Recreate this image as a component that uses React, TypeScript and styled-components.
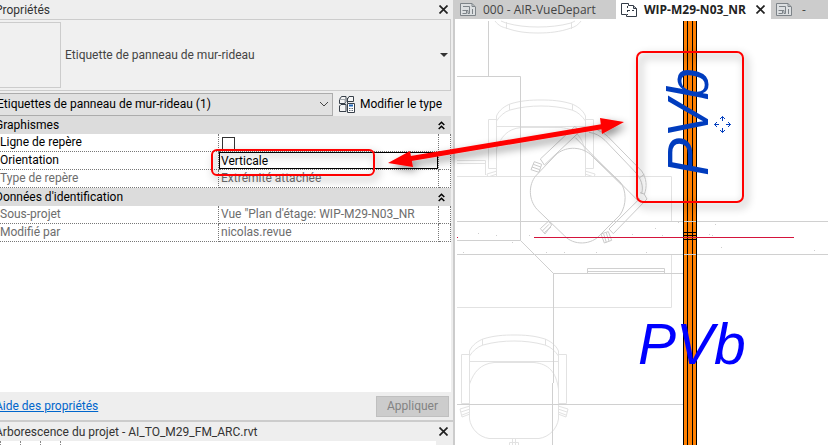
import React from "react";
import styled, { createGlobalStyle } from "styled-components";

const GlobalStyle = createGlobalStyle`
  * { box-sizing: border-box; }
  html, body { margin: 0; height: 100%; }
  body {
    overflow: hidden;
    font-family: Roboto, "Open Sans", sans-serif;
    font-size: 12px;
    line-height: 16px;
    color: #000;
  }
  button, input, select { font: inherit; color: inherit; margin: 0; padding: 0; }
  button { border: 0; background: none; }
`;

const Window = styled.div`
  position: relative;
  display: grid;
  grid-template-columns: minmax(0, 455fr) minmax(0, 373fr);
  height: 100vh;
  overflow: hidden;
  background: #fff;
`;

const Dock = styled.aside`
  display: flex;
  overflow: hidden;
  background: #eee;
  border-right: 2px solid #ccc;
`;

const DockContent = styled.div`
  flex: 1;
  min-width: 0;
  display: flex;
  flex-direction: column;
  margin-left: -6px;
`;

const TitleBar = styled.header`
  flex: none;
  display: flex;
  align-items: center;
  justify-content: space-between;
  height: 19px;
  padding: 0 4px 0 1px;
  color: #333;
`;

const Heading = styled.h2`
  margin: 0;
  font-size: 12px;
  font-weight: 400;
`;

const IconButton = styled.button`
  display: flex;
  align-items: center;
  justify-content: center;
  width: 12px;
  height: 16px;
`;

const TypeSelector = styled.button`
  flex: none;
  display: flex;
  align-items: center;
  gap: 4px;
  height: 72px;
  margin-right: 2px;
  padding: 2px 2px 2px 0;
  border: 1px solid #ccc;
  background: #f0f0f0;
  color: #444;
  text-align: left;
`;

const Thumbnail = styled.span`
  width: 66px;
  height: 66px;
  border: 1px solid #ccc;
`;

const TypeName = styled.span`
  flex: 1;
`;

const FilterRow = styled.div`
  flex: none;
  display: flex;
  align-items: center;
  gap: 6px;
  height: 25px;
  padding-top: 1px;
`;

const SelectBox = styled.div`
  position: relative;
  flex: none;
  width: 339px;
  max-width: 75%;
  height: 23px;
`;

const Select = styled.select`
  appearance: none;
  width: 100%;
  height: 100%;
  padding: 0 24px 0 2px;
  border: 1px solid #acacac;
  border-radius: 0;
  background: #e1e1e1;
`;

const SelectArrow = styled.svg`
  position: absolute;
  right: 4px;
  top: 8px;
  pointer-events: none;
`;

const EditType = styled.button`
  display: flex;
  align-items: center;
  gap: 5px;
  white-space: nowrap;
`;

const Grid = styled.div`
  flex: 1;
  min-height: 0;
  overflow: hidden;
  margin-right: 2px;
  background: #fff;
`;

const Table = styled.table`
  width: 100%;
  table-layout: fixed;
  border-collapse: separate;
  border-spacing: 0;
`;

const LabelCol = styled.col`
  width: 225px;
`;

const ActionCol = styled.col`
  width: 12px;
`;

const SectionCell = styled.th`
  height: 18px;
  padding: 0 5px 0 0;
  background: #dcdcdc;
  font-weight: 400;
  text-align: left;
`;

const SectionButton = styled.button`
  display: flex;
  align-items: center;
  justify-content: space-between;
  width: 100%;
  height: 18px;
  padding-left: 1px;
  padding-right: 1px;
`;

const Row = styled.tr<{ $muted?: boolean }>`
  color: ${(p) => (p.$muted ? "#6d6d6d" : "#000")};
`;

const LabelCell = styled.th`
  height: 18px;
  padding: 0 0 1px 6px;
  border-right: 1px dotted #777;
  border-bottom: 1px dotted #777;
  line-height: 15px;
  font-weight: 400;
  text-align: left;
  white-space: nowrap;
`;

const ValueCell = styled.td<{ $active?: boolean }>`
  height: 18px;
  padding: ${(p) => (p.$active ? "0" : "0 0 1px 2px")};
  border-right: 1px dotted #777;
  border-bottom: 1px dotted #777;
  line-height: 15px;
  white-space: nowrap;
`;

const FieldInput = styled.input`
  display: block;
  width: 100%;
  height: 17px;
  padding: 0 1px;
  border: 1px solid #000;
  border-radius: 0;
  background: #fff;
  outline: none;
`;

const Tick = styled.input`
  appearance: none;
  display: block;
  width: 13px;
  height: 13px;
  border: 1px solid #333;
  background: #fff;
  margin: 3px 0 0 1px;
`;

const Footer = styled.footer`
  flex: none;
  display: flex;
  align-items: center;
  justify-content: space-between;
  height: 28px;
  padding: 0 4px 0 1px;
`;

const HelpLink = styled.a`
  color: #0066cc;
`;

const ApplyButton = styled.button`
  width: 73px;
  height: 21px;
  border: 1px solid #bfbfbf;
  background: #ccc;
  color: #838383;
`;

const BrowserPanel = styled.section`
  flex: none;
  height: 25px;
  border-top: 2px solid #ccc;
  overflow: hidden;
`;

const Tree = styled.div`
  display: flex;
  gap: 19px;
  height: 4px;
  margin-right: 17px;
  padding-left: 6px;
  background: #fff;
`;

const TreeLine = styled.span`
  border-left: 1px dotted #888;
`;

const View = styled.main`
  display: flex;
  flex-direction: column;
  min-width: 0;
`;

const TabBar = styled.nav`
  flex: none;
  display: flex;
  height: 19px;
  overflow: hidden;
  background: #ccc;
  font-family: "Open Sans", sans-serif;
`;

const Tab = styled.div<{ $active?: boolean; $width: number }>`
  flex: none;
  display: flex;
  align-items: center;
  justify-content: space-between;
  width: ${(p) => p.$width}px;
  padding: 0 5px;
  background: ${(p) => (p.$active ? "#fff" : "#ccc")};
  color: ${(p) => (p.$active ? "#222" : "#444")};
  font-weight: ${(p) => (p.$active ? 700 : 400)};
  white-space: nowrap;
`;

const TabButton = styled.button`
  display: flex;
  align-items: center;
  gap: 7px;
  font-weight: inherit;
`;

const Sheet = styled.svg`
  flex: 1;
  display: block;
  width: 100%;
  min-height: 0;
  font-family: "Liberation Sans", sans-serif;
  font-style: italic;
  font-size: 57px;
`;

const Markup = styled.svg`
  position: absolute;
  inset: 0;
  width: 100%;
  height: 100%;
  pointer-events: none;
`;

const CloseIcon = () => (
  <svg width="9" height="9" viewBox="0 0 9 9" stroke="#222" strokeWidth="1.7">
    <path d="M0.5 0.5L8.5 8.5M8.5 0.5L0.5 8.5" />
  </svg>
);

const CollapseIcon = () => (
  <svg width="7" height="9" viewBox="0 0 7 9" fill="none" stroke="#000" strokeWidth="1.5">
    <path d="M0.7 4L3.5 1.2L6.3 4M0.7 8L3.5 5.2L6.3 8" />
  </svg>
);

const SheetIcon = () => (
  <svg width="16" height="14" viewBox="0 0 16 14" fill="none" stroke="#7d8388">
    <path d="M0.5 0.5H12L15.5 4V12.5H0.5Z" fill="#dcdfe1" />
    <path d="M3 3.5H9.5V10.5H8V7.5H2.5M2.5 10.5H6.5V8M12 0.5V3.5H15M12.5 6V11" />
  </svg>
);

const PlanIcon = () => (
  <svg width="16" height="14" viewBox="0 0 16 14" fill="none" stroke="#333b46">
    <path d="M0.5 0.5H7.5V2.5H12L15.5 5.5V13.5H5.5V11.5H0.5Z" fill="#fff" />
    <path d="M12.5 2.5V5.5H15.5" />
    <path d="M6.5 3V12M7 7.5H15" strokeDasharray="2 2" />
  </svg>
);

const EditTypeIcon = () => (
  <svg width="16" height="17" viewBox="0 0 16 17" fill="none" stroke="#38404a">
    <path d="M0.5 3.5L2.5 0.5H7V5.5L6 7.5H0.5ZM8.5 3L10 0.5H14.5V5.5H8.5ZM8.5 2V7M0.5 15.5V10L2 8.5H7V15.5Z" fill="#f5f5f5" />
    <path d="M0.5 3.5H6V7" stroke="#a3a8ad" />
    <path d="M8.5 7.5H15.5V16.5H8.5Z" fill="#fff" />
    <path d="M10 9.5H14" stroke="#1d64b8" strokeWidth="2" />
    <path d="M10 12.5H11.5M12.5 12.5H14M10 14.5H11.5M12.5 14.5H14" stroke="#5f6a78" />
  </svg>
);

const Chair = () => (
  <g stroke="#e2e2e2">
    <path d="M-44.5 84V16C-42 10 -36 6 -31 4C-20 0.5 -10 0 0 0S20 0.5 31 4C36 6 42 10 44.5 16V84" />
    <path d="M-44.5 21C-41 16 -37 12 -31 10C-20 7 -10 6 0 6S20 7 31 10C37 12 41 16 44.5 21M-31.5 4V10M31.5 4V10M-44.5 26.5H44.5" />
    <path d="M-44.5 49C-40 37 -34 29 -20 27.5H20C35 29 42 37 44.5 54" />
    <path d="M-44.5 19.5H-52.5V68.5H-44.5M44.5 19.5H52.5V68.5H44.5" />
    <path d="M-44.5 84C-43 94 -35 102 -25 103.5H25C35 102 43 94 44.5 84" />
    <path d="M-44 71L-54 74L-52 82L-44 79M-53 77L-44 74M-52 80L-44 77M44 71L54 74L52 82L44 79M53 77L44 74M52 80L44 77" />
    <path d="M-1.5 104V111M1.5 104V111M-4.5 111V107.5H4.5V111" />
  </g>
);

const specks = [
  [478, 233], [496, 235], [529, 235], [512, 242], [463, 252], [546, 252], [564, 252],
  [596, 252], [646, 252], [632, 234], [655, 228], [662, 235], [678, 222], [709, 234],
  [715, 224], [712, 235], [721, 247], [814, 250],
];

const Drawing = () => (
  <Sheet role="img" aria-label="WIP-M29-N03_NR">
    <g transform="translate(-455 -19)" fill="none">
      <defs>
        <clipPath id="upper">
          <path d="M457 21H683V176H457Z" />
        </clipPath>
      </defs>
      <g clipPath="url(#upper)">
        <g transform="translate(541 100)"><Chair /></g>
      </g>
      <g transform="translate(514 335)"><Chair /></g>
      <g stroke="#e2e2e2">
        <path d="M495 21C499 26 502 27 506 28C517 32 527 33 538 33S560 32 571 28C575 27 578 25 581 21M501 21L506 23C517 26 527 27 538 27S560 26 571 23L575 21M506.5 22V29M571.5 22V29" />
        <path d="M457 176.5H671.5V221M457 307.5H671.5V254" />
        <path d="M457 160.5H485.5V175M457 163.5H485.5" />
      </g>
      <g stroke="#d0d0d0">
        <path d="M488.5 21V76.5M457 76.5H520.5V240.5H457M520.5 240.5L553.5 273.5H683M553.5 273V383M552.5 383V445" />
        <path d="M457 221.5H2000M457 254.5H2000M457 404.5H683" />
        <path d="M587.5 273V268.5H664.5V273M588 271.5H664" />
      </g>
      <g transform="translate(525 115) scale(.3333)" stroke="#cacaca" strokeWidth="3">
        <path d="M92 120C118 95 165 92 196 118L285 200C305 225 306 270 285 300L228 357C200 392 145 392 118 362L37 284C10 255 10 210 32 183Z" />
        <path d="M46 132L150 34L164 50L58 150ZM151 68L340 258M200 122L290 210" />
        <path d="M160 44L180 36C205 38 232 48 250 66L350 168C365 190 367 215 358 238M192 52C210 54 225 62 240 76L325 165C350 190 356 215 350 235M344 188L358 178M345 233L360 238M358 238L366 252L265 356L252 342L345 250" />
        <path d="M28 140L50 148L42 172L18 164ZM25 148L47 156M21 156L44 164M46 341L70 319L80 330L60 357ZM52 348L72 328M58 353L78 336M228 357L250 350L260 376L238 384ZM236 357L244 382M244 354L252 378" />
      </g>
      <g fill="#cfcfcf">
        {specks.map(([x, y]) => <rect key={`${x}-${y}`} x={x} y={y} width="1" height="1" />)}
      </g>
      <rect x="683" y="21" width="14" height="2000" fill="#ff8000" />
      <path d="M683.5 21V2000M687.5 21V2000M692.5 21V2000M696.5 21V2000M683 232.5H697M683 235.5H697M683 239.5H697" stroke="#000" />
      <path d="M684 221.5H696M684 254.5H696" stroke="#d0d0d0" />
      <path d="M534 237.5H794M457 237.5H458" stroke="#d4143c" />
      <text transform="translate(708 176) rotate(-90)" fill="#003cbe">PVb</text>
      <text x="638" y="364" fill="#0000ff">PVb</text>
      <path d="M722.5 116.5V121M722.5 128V132.5M714.5 124.5H719M726 124.5H730.5M720 119L722.5 116.5L725 119M720 130L722.5 132.5L725 130M717 122L714.5 124.5L717 127M728 122L730.5 124.5L728 127" stroke="#003cbe" />
    </g>
  </Sheet>
);

const Section = ({ title }: { title: string }) => (
  <tr>
    <SectionCell colSpan={3} scope="colgroup">
      <SectionButton type="button"><span>{title}</span><CollapseIcon /></SectionButton>
    </SectionCell>
  </tr>
);

const ReadOnly = ({ label, value }: { label: string; value: string }) => (
  <Row $muted>
    <LabelCell scope="row">{label}</LabelCell>
    <ValueCell>{value}</ValueCell>
    <ValueCell />
  </Row>
);

export default function App() {
  return (
    <>
      <GlobalStyle />
      <Window>
        <Dock>
          <DockContent>
            <TitleBar>
              <Heading>Propriétés</Heading>
              <IconButton type="button" aria-label="Fermer les propriétés"><CloseIcon /></IconButton>
            </TitleBar>
            <TypeSelector type="button">
              <Thumbnail />
              <TypeName>Etiquette de panneau de mur-rideau</TypeName>
              <svg width="8" height="4" viewBox="0 0 8 4" fill="#333"><path d="M0 0H8L4 4Z" /></svg>
            </TypeSelector>
            <FilterRow>
              <SelectBox>
                <Select aria-label="Filtre des propriétés">
                  <option>Etiquettes de panneau de mur-rideau (1)</option>
                </Select>
                <SelectArrow width="10" height="7" viewBox="0 0 10 7" fill="none" stroke="#444">
                  <path d="M1 1L5 5L9 1" />
                </SelectArrow>
              </SelectBox>
              <EditType type="button"><EditTypeIcon />Modifier le type</EditType>
            </FilterRow>
            <Grid>
              <Table>
                <colgroup><LabelCol /><col /><ActionCol /></colgroup>
                <tbody>
                  <Section title="Graphismes" />
                  <Row>
                    <LabelCell scope="row"><label htmlFor="leader">Ligne de repère</label></LabelCell>
                    <ValueCell><Tick id="leader" type="checkbox" /></ValueCell>
                    <ValueCell />
                  </Row>
                  <Row>
                    <LabelCell scope="row"><label htmlFor="orientation">Orientation</label></LabelCell>
                    <ValueCell $active><FieldInput id="orientation" defaultValue="Verticale" /></ValueCell>
                    <ValueCell />
                  </Row>
                  <ReadOnly label="Type de repère" value="Extrémité attachée" />
                  <Section title="Données d'identification" />
                  <ReadOnly label="Sous-projet" value={'Vue "Plan d\'étage: WIP-M29-N03_NR'} />
                  <ReadOnly label="Modifié par" value="nicolas.revue" />
                </tbody>
              </Table>
            </Grid>
            <Footer>
              <HelpLink href="#aide">Aide des propriétés</HelpLink>
              <ApplyButton type="button" disabled>Appliquer</ApplyButton>
            </Footer>
            <BrowserPanel>
              <TitleBar>
                <Heading>Arborescence du projet - AI_TO_M29_FM_ARC.rvt</Heading>
                <IconButton type="button" aria-label="Fermer l'arborescence"><CloseIcon /></IconButton>
              </TitleBar>
              <Tree><TreeLine /><TreeLine /><TreeLine /><TreeLine /></Tree>
            </BrowserPanel>
          </DockContent>
        </Dock>
        <View>
          <TabBar>
            <Tab $width={161}>
              <TabButton type="button"><SheetIcon />000 - AIR-VueDepart</TabButton>
            </Tab>
            <Tab $active $width={155}>
              <TabButton type="button"><PlanIcon />WIP-M29-N03_NR</TabButton>
              <IconButton type="button" aria-label="Fermer la vue"><CloseIcon /></IconButton>
            </Tab>
            <Tab $width={60}>
              <TabButton type="button"><SheetIcon /><span>&nbsp;-</span></TabButton>
            </Tab>
          </TabBar>
          <Drawing />
        </View>
        <Markup aria-hidden="true">
          <defs>
            <filter id="shade" filterUnits="userSpaceOnUse" x="190" y="30" width="580" height="200">
              <feDropShadow dx="3" dy="4" stdDeviation="4" floodColor="#000" floodOpacity="0.45" />
            </filter>
          </defs>
          <g filter="url(#shade)" fill="none" stroke="#ff0000" strokeWidth="2">
            <rect x="212" y="150" width="162" height="25" rx="5" />
            <rect x="637" y="52" width="106" height="150" rx="6" />
            <path d="M408 159L606 126" strokeWidth="5" />
            <path d="M388 163L410 151L413 167ZM624 122L600 118L602 134Z" fill="#ff0000" stroke="none" />
          </g>
        </Markup>
      </Window>
    </>
  );
}
